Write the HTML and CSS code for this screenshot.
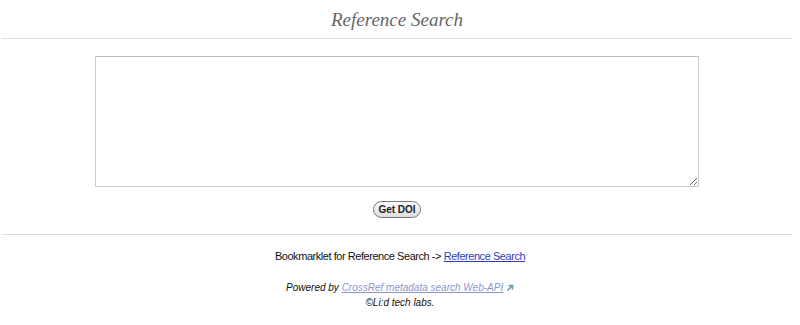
FILE: index.html
```html
<!DOCTYPE html>
<html>
  <head>
    <title>Reference Search</title>
    <link rel="stylesheet" href="styles.css">
  </head>
  <body>
    <div class="header">
      <h1>Reference Search</h1>
    </div>

    <div class="search-container">
      <textarea id="search-input"></textarea>
      <div class="button-row">
        <button id="search-button">Get DOI</button>
      </div>
    </div>

    <div class="footer">
      <p class="bookmarklet">Bookmarklet for Reference Search -&gt; <a href="#">Reference Search</a></p>
      <p class="credits">
        Powered by <a class="ext" href="#">CrossRef metadata search Web-API</a>
        <svg class="ext-icon" width="8" height="8" viewBox="0 0 8 8">
          <path d="M1.5 6.5 L6 2 M2.5 1.5 H6.5 V5.5" fill="none" stroke="#6a9ab0" stroke-width="1.6"/>
        </svg>
        <br>&copy;Li:d tech labs.
      </p>
    </div>
  </body>
</html>
```

FILE: styles.css
```css
body {
  margin: 0;
  font-family: "Liberation Sans", Arial, sans-serif;
  background-color: #fff;
}

.header {
  margin: 0 8px 0 2px;
  border-bottom: 1px solid #ddd;
  height: 38px;
  text-align: center;
}

h1 {
  margin: 0;
  padding-top: 9px;
  font-family: "Liberation Serif", "DejaVu Serif", serif;
  font-style: italic;
  font-weight: normal;
  font-size: 19px;
  color: #666;
}

.search-container {
  margin: 0 8px 0 2px;
  padding-top: 17px;
  border-bottom: 1px solid #ddd;
  height: 178px;
}

.search-container textarea {
  display: block;
  box-sizing: border-box;
  width: 604px;
  height: 131px;
  margin: 0 0 0 93px;
  border: 1px solid #ccc;
  border-top-color: #bbb;
  resize: both;
}

.button-row {
  text-align: center;
  margin-top: 12px;
}

.button-row button {
  font-family: "Liberation Sans", Arial, sans-serif;
  font-size: 10px;
  font-weight: bold;
  color: #222;
  width: 48px;
  padding: 0;
  height: 17px;
  border: 1px solid #777;
  border-radius: 9px;
  background: linear-gradient(#fdfdfd, #ddd);
}

.footer {
  text-align: center;
}

.bookmarklet {
  margin: 15px 0 0;
  font-size: 11px;
  letter-spacing: -0.45px;
  color: #111;
}

.bookmarklet a {
  color: #2a3ec0;
}

.credits {
  margin: 18px 0 0;
  font-size: 10px;
  font-style: italic;
  line-height: 15px;
  color: #111;
}

.credits a {
  color: #8d96cc;
}

.ext-icon {
  vertical-align: -1px;
}
```
